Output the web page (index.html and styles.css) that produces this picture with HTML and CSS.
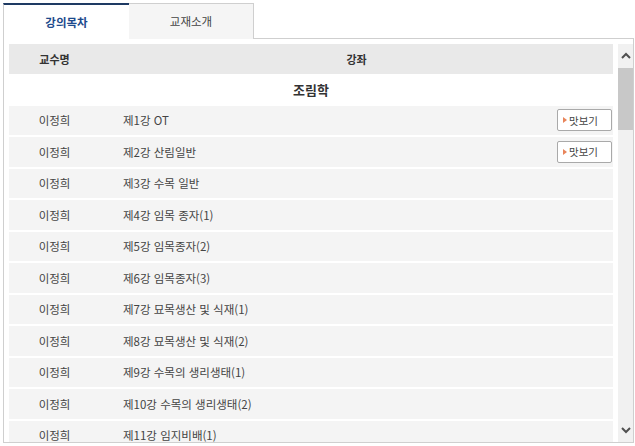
FILE: index.html
```html
<!DOCTYPE html>
<html lang="ko">
<head>
<meta charset="utf-8">
<link rel="stylesheet" href="styles.css">
</head>
<body>
<div class="frame">
  <div class="tabs">
    <div class="tab active">강의목차</div>
    <div class="tab">교재소개</div>
    <div class="tab-rest"></div>
  </div>
  <div class="panel">
    <div class="list">
      <div class="row head"><div class="c1">교수명</div><div class="c2 center">강좌</div></div>
      <div class="row group">조림학</div>
      <div class="row"><div class="c1">이정희</div><div class="c2">제1강 OT</div><div class="c3"><span class="btn"><span class="tri"></span>맛보기</span></div></div>
      <div class="row"><div class="c1">이정희</div><div class="c2">제2강 산림일반</div><div class="c3"><span class="btn"><span class="tri"></span>맛보기</span></div></div>
      <div class="row"><div class="c1">이정희</div><div class="c2">제3강 수목 일반</div><div class="c3"></div></div>
      <div class="row"><div class="c1">이정희</div><div class="c2">제4강 임목 종자(1)</div><div class="c3"></div></div>
      <div class="row"><div class="c1">이정희</div><div class="c2">제5강 임목종자(2)</div><div class="c3"></div></div>
      <div class="row"><div class="c1">이정희</div><div class="c2">제6강 임목종자(3)</div><div class="c3"></div></div>
      <div class="row"><div class="c1">이정희</div><div class="c2">제7강 묘목생산 및 식재(1)</div><div class="c3"></div></div>
      <div class="row"><div class="c1">이정희</div><div class="c2">제8강 묘목생산 및 식재(2)</div><div class="c3"></div></div>
      <div class="row"><div class="c1">이정희</div><div class="c2">제9강 수목의 생리생태(1)</div><div class="c3"></div></div>
      <div class="row"><div class="c1">이정희</div><div class="c2">제10강 수목의 생리생태(2)</div><div class="c3"></div></div>
      <div class="row"><div class="c1">이정희</div><div class="c2">제11강 임지비배(1)</div><div class="c3"></div></div>
    </div>
    <div class="scrollbar">
      <div class="arrow">
        <svg width="10" height="7" viewBox="0 0 10 7"><path d="M1 6 L5 2 L9 6" fill="none" stroke="#505050" stroke-width="2"/></svg>
      </div>
      <div class="track"><div class="thumb"></div></div>
      <div class="arrow">
        <svg width="10" height="7" viewBox="0 0 10 7"><path d="M1 1 L5 5 L9 1" fill="none" stroke="#505050" stroke-width="2"/></svg>
      </div>
    </div>
  </div>
</div>
</body>
</html>
```

FILE: styles.css
```css
html, body {
  margin: 0;
  padding: 0;
  background: #fff;
}
body {
  font-family: "Noto Sans CJK KR", "Noto Sans", sans-serif;
  font-size: 11.5px;
  color: #444;
  overflow: hidden;
}
.frame {
  padding: 3px 1px 0 3px;
  height: 443px;
  box-sizing: border-box;
  display: flex;
  flex-direction: column;
}
.tabs {
  display: flex;
  height: 36px;
  flex: none;
}
.tab {
  width: 125px;
  box-sizing: border-box;
  display: flex;
  align-items: center;
  justify-content: center;
  font-size: 11.5px;
  color: #444;
  background: #f5f5f5;
  border: 1px solid #cfcfcf;
  border-bottom: none;
  border-left: none;
  padding-bottom: 1px;
}
.tab.active {
  width: 126px;
  background: #fff;
  border: 1px solid #cfcfcf;
  border-top: 2px solid #1e3a63;
  border-bottom: none;
  border-right: none;
  color: #1d4a8c;
  font-weight: bold;
}
.tab-rest {
  flex: 1;
  border-bottom: 1px solid #cfcfcf;
}
.panel {
  flex: 1;
  min-height: 0;
  display: flex;
  border: 1px solid #cfcfcf;
  border-top: none;
  padding: 5px 0 0 5px;
  gap: 5px;
}
.list {
  flex: 1;
  overflow: hidden;
}
.row {
  display: flex;
  align-items: center;
  height: 29.5px;
  background: #f4f4f4;
  border-bottom: 2px solid #fff;
}
.row.head {
  height: 30px;
  border-bottom: none;
  background: #e9e9e9;
  font-weight: bold;
  font-size: 11px;
  color: #333;
}
.row.group {
  background: #fff;
  justify-content: center;
  font-weight: bold;
  font-size: 13px;
  color: #333;
  height: 31.5px;
  border-bottom: none;
}
.c1 {
  width: 91px;
  text-align: center;
  flex: none;
}
.c2 {
  flex: 1;
  padding-left: 23px;
}
.c2.center {
  text-align: center;
  padding-left: 0;
}
.c3 {
  width: 56px;
  flex: none;
  display: flex;
}
.btn {
  display: inline-flex;
  align-items: center;
  width: 55px;
  height: 22px;
  box-sizing: border-box;
  border: 1px solid #a9a9a9;
  border-radius: 2px;
  background: #fff;
  font-size: 10.5px;
  color: #444;
  padding-left: 5px;
  gap: 2px;
}
.tri {
  width: 0;
  height: 0;
  border-top: 3px solid transparent;
  border-bottom: 3px solid transparent;
  border-left: 4px solid #e8845a;
}
.scrollbar {
  width: 15px;
  flex: none;
  background: #f1f1f1;
  display: flex;
  flex-direction: column;
}
.arrow {
  height: 23px;
  display: flex;
  align-items: center;
  justify-content: center;
  flex: none;
}
.track {
  flex: 1;
}
.thumb {
  height: 62px;
  margin-top: 1px;
  background: #c8c8c8;
}
```
